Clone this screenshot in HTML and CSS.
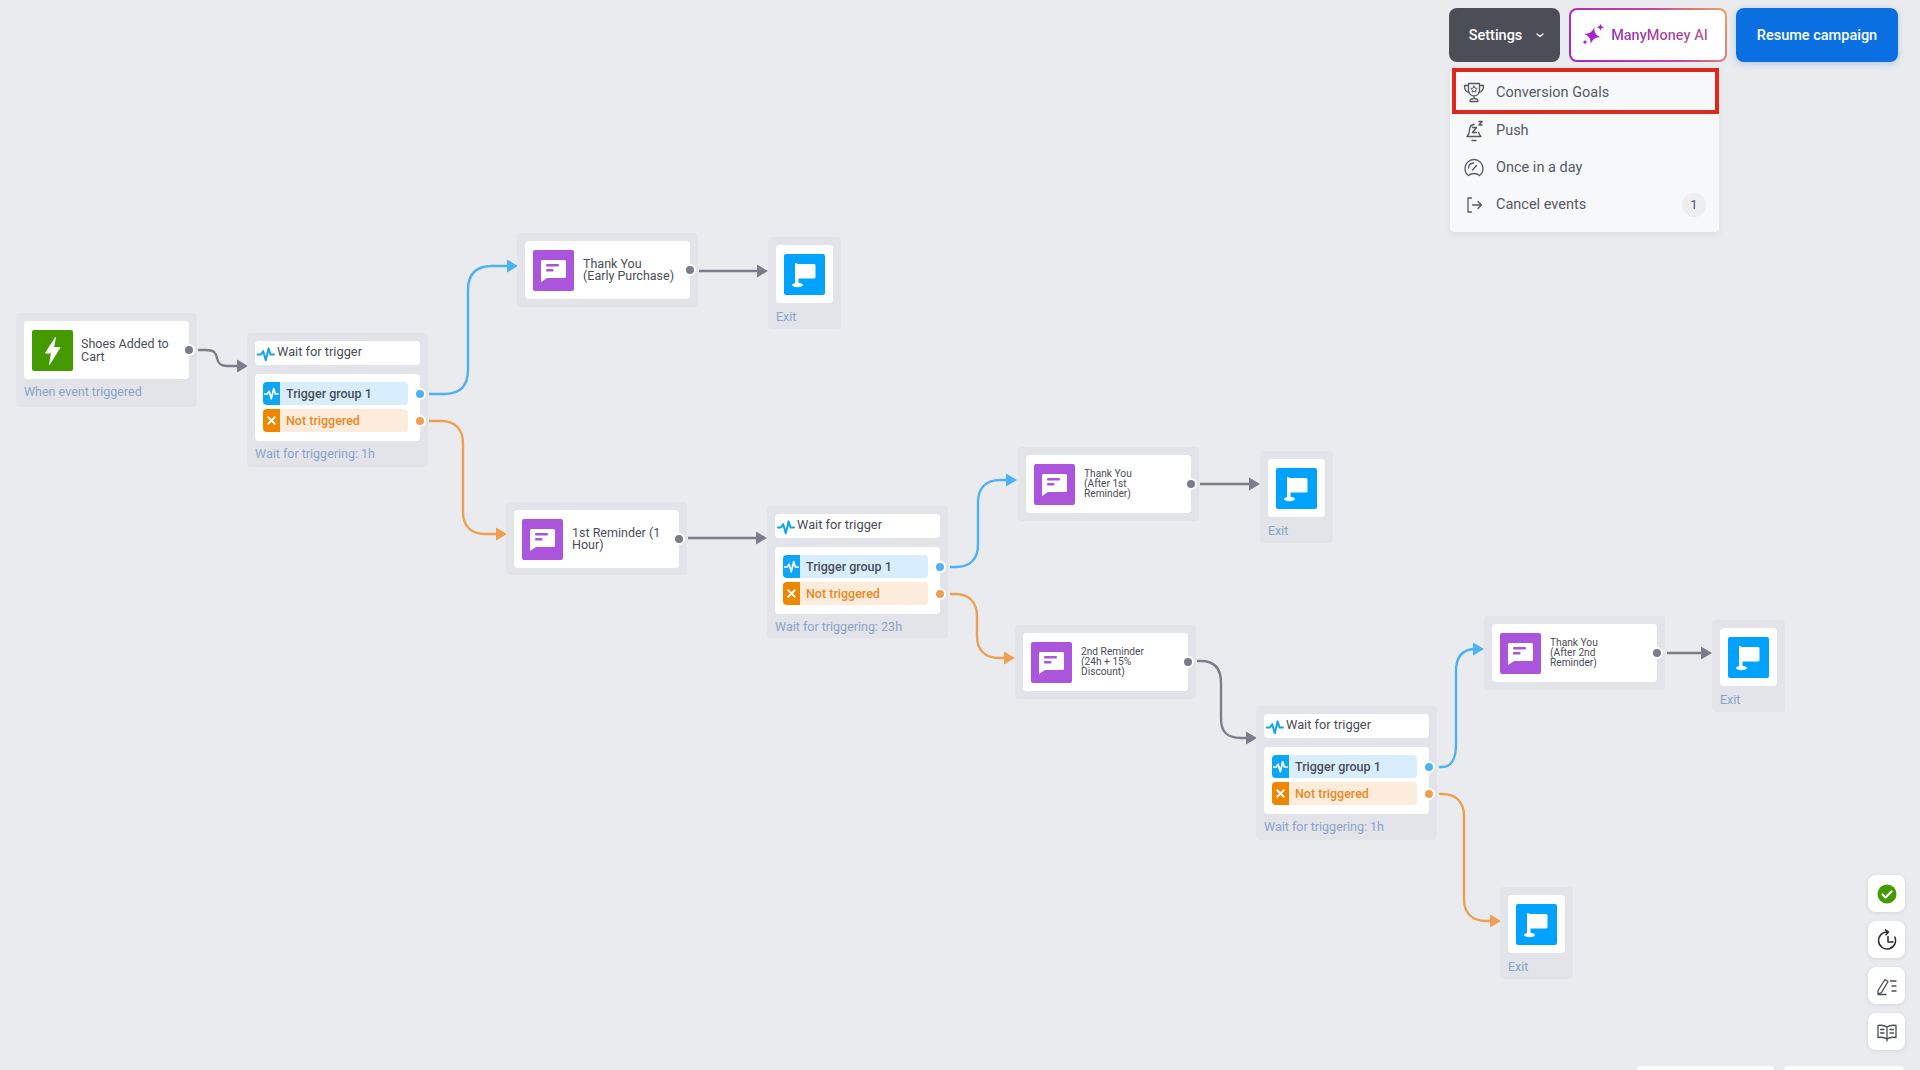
FILE: index.html
```html
<!DOCTYPE html>
<html lang="en">
<head>
  <meta charset="UTF-8" />
  <meta name="viewport" content="width=device-width, initial-scale=1.0"/>
  <title>Campaign flow</title>
  <link rel="stylesheet" href="styles.css">
</head>
<body>
  <svg class="sprite" width="0" height="0">
    <symbol id="i-msg" viewBox="0 0 41 41">
      <path d="M9.5 10h22a1.500 1.500 0 0 1 1.500 1.500v15a1.500 1.500 0 0 1-1.500 1.500H14l-6 4V11.500A1.500 1.500 0 0 1 9.500 10z" fill="#fff"/>
      <rect x="13" y="14" width="13" height="2.400" rx="1" fill="#ab55dc"/>
      <rect x="13" y="19" width="7.500" height="2.400" rx="1" fill="#ab55dc"/>
    </symbol>
    <symbol id="i-flag" viewBox="0 0 41 41">
      <path d="M11 9c1 0 2 .5 3 1h16a1.500 1.500 0 0 1 1.500 1.500v11.500a1.500 1.500 0 0 1-1.500 1.500H14.500V30H11z" fill="#fff"/>
      <ellipse cx="13.500" cy="31" rx="5.500" ry="2.200" fill="#fff"/>
    </symbol>
    <symbol id="i-bolt" viewBox="0 0 41 41">
      <path d="M23.500 7.500 13.500 23h6l-2 11.500L28 17.500h-6.500z" fill="#fff" stroke="#fff" stroke-width="1" stroke-linejoin="round"/>
    </symbol>
    <symbol id="i-pulse" viewBox="0 0 16 16">
      <path d="M.8 8.500h2.700l2 -3 2.300 8 2.500-10.500 1.800 5.500h3" fill="none" stroke="currentColor" stroke-width="1.800" stroke-linejoin="round" stroke-linecap="round"/>
    </symbol>
    <symbol id="i-x" viewBox="0 0 16 16">
      <path d="M4 4l8 8M12 4l-8 8" fill="none" stroke="#fff" stroke-width="2.300" stroke-linecap="round"/>
    </symbol>
  </svg>

  <div class="canvas">
    <svg class="wires" width="1920" height="1070" viewBox="0 0 1920 1070" fill="none" stroke-width="2.400">
      <g class="wire-gray">
        <path d="M198 350h8c8 0 10 3 11 8 1 5 3 8 10 8h13"/>
        <polygon points="237,359.500 248,366 237,372.500"/>
        <path d="M699 271h62"/>
        <polygon points="757,264.500 768,271 757,277.500"/>
        <path d="M688 538h72"/>
        <polygon points="756,531.500 767,538 756,544.500"/>
        <path d="M1200 484h53"/>
        <polygon points="1249,477.500 1260,484 1249,490.500"/>
        <path d="M1197 661h4c14 0 20 8 20 22v35c0 14 6 20 20 20h9"/>
        <polygon points="1246,731.500 1257,738 1246,744.500"/>
        <path d="M1667 653h38"/>
        <polygon points="1701,646.500 1712,653 1701,659.500"/>
      </g>
      <g class="wire-blue">
        <path d="M429 394h15c16 0 24-8 24-24v-80c0-16 8-24 24-24h20"/>
        <polygon points="507,259.500 518,266 507,272.500"/>
        <path d="M950 567h6c14 0 22-8 22-22v-43c0-14 8-22 22-22h10"/>
        <polygon points="1006,473.500 1017,480 1006,486.500"/>
        <path d="M1439 767h3c9 0 14-8 14-22v-74c0-14 6-22 20-22h1"/>
        <polygon points="1473,642.500 1484,649 1473,655.500"/>
      </g>
      <g class="wire-orange">
        <path d="M429 421h12c14 0 22 8 22 22v69c0 14 8 22 22 22h14"/>
        <polygon points="496,527.500 507,534 496,540.500"/>
        <path d="M950 594h5c14 0 22 8 22 22v20c0 14 8 22 22 22h9"/>
        <polygon points="1004,651.500 1015,658 1004,664.500"/>
        <path d="M1439 794h3c14 0 22 8 22 22v83c0 14 8 22 22 22h8"/>
        <polygon points="1490,914.500 1501,921 1490,927.500"/>
      </g>
    </svg>

    <div class="node node-start">
      <div class="card">
        <div class="tile tile-green"><svg width="41" height="41"><use href="#i-bolt"/></svg></div>
        <div class="card-text">Shoes Added to<br>Cart</div>
        <span class="dot"></span>
      </div>
      <div class="node-label">When event triggered</div>
    </div>

    <div class="node node-wait1">
      <div class="wait-head"><svg class="wait-pulse" width="18" height="18"><use href="#i-pulse"/></svg>Wait for trigger</div>
      <div class="wait-body">
        <div class="row row-blue"><span class="row-icon"><svg width="15" height="15"><use href="#i-pulse"/></svg></span>Trigger group 1<span class="dot dot-blue"></span></div>
        <div class="row row-orange"><span class="row-icon"><svg width="13" height="13"><use href="#i-x"/></svg></span>Not triggered<span class="dot dot-orange"></span></div>
      </div>
      <div class="node-label">Wait for triggering: 1h</div>
    </div>

    <div class="node node-msg1">
      <div class="card card-msg">
        <div class="tile tile-purple"><svg width="41" height="41"><use href="#i-msg"/></svg></div>
        <div class="card-text card-text-mid">Thank You<br>(Early Purchase)</div>
        <span class="dot"></span>
      </div>
    </div>

    <div class="node node-exit node-exit1">
      <div class="card"><div class="tile tile-blue"><svg width="41" height="41"><use href="#i-flag"/></svg></div></div>
      <div class="node-label">Exit</div>
    </div>

    <div class="node node-rem1">
      <div class="card card-msg">
        <div class="tile tile-purple"><svg width="41" height="41"><use href="#i-msg"/></svg></div>
        <div class="card-text card-text-mid">1st Reminder (1<br>Hour)</div>
        <span class="dot"></span>
      </div>
    </div>

    <div class="node node-wait2">
      <div class="wait-head"><svg class="wait-pulse" width="18" height="18"><use href="#i-pulse"/></svg>Wait for trigger</div>
      <div class="wait-body">
        <div class="row row-blue"><span class="row-icon"><svg width="15" height="15"><use href="#i-pulse"/></svg></span>Trigger group 1<span class="dot dot-blue"></span></div>
        <div class="row row-orange"><span class="row-icon"><svg width="13" height="13"><use href="#i-x"/></svg></span>Not triggered<span class="dot dot-orange"></span></div>
      </div>
      <div class="node-label">Wait for triggering: 23h</div>
    </div>

    <div class="node node-msg2">
      <div class="card card-msg">
        <div class="tile tile-purple"><svg width="41" height="41"><use href="#i-msg"/></svg></div>
        <div class="card-text card-text-small">Thank You<br>(After 1st<br>Reminder)</div>
        <span class="dot"></span>
      </div>
    </div>

    <div class="node node-exit node-exit2">
      <div class="card"><div class="tile tile-blue"><svg width="41" height="41"><use href="#i-flag"/></svg></div></div>
      <div class="node-label">Exit</div>
    </div>

    <div class="node node-rem2">
      <div class="card card-msg">
        <div class="tile tile-purple"><svg width="41" height="41"><use href="#i-msg"/></svg></div>
        <div class="card-text card-text-small">2nd Reminder<br>(24h + 15%<br>Discount)</div>
        <span class="dot"></span>
      </div>
    </div>

    <div class="node node-wait3">
      <div class="wait-head"><svg class="wait-pulse" width="18" height="18"><use href="#i-pulse"/></svg>Wait for trigger</div>
      <div class="wait-body">
        <div class="row row-blue"><span class="row-icon"><svg width="15" height="15"><use href="#i-pulse"/></svg></span>Trigger group 1<span class="dot dot-blue"></span></div>
        <div class="row row-orange"><span class="row-icon"><svg width="13" height="13"><use href="#i-x"/></svg></span>Not triggered<span class="dot dot-orange"></span></div>
      </div>
      <div class="node-label">Wait for triggering: 1h</div>
    </div>

    <div class="node node-msg3">
      <div class="card card-msg">
        <div class="tile tile-purple"><svg width="41" height="41"><use href="#i-msg"/></svg></div>
        <div class="card-text card-text-small">Thank You<br>(After 2nd<br>Reminder)</div>
        <span class="dot"></span>
      </div>
    </div>

    <div class="node node-exit node-exit3">
      <div class="card"><div class="tile tile-blue"><svg width="41" height="41"><use href="#i-flag"/></svg></div></div>
      <div class="node-label">Exit</div>
    </div>

    <div class="node node-exit node-exit4">
      <div class="card"><div class="tile tile-blue"><svg width="41" height="41"><use href="#i-flag"/></svg></div></div>
      <div class="node-label">Exit</div>
    </div>
  </div>

  <div class="topbar">
    <div class="settings">
      <button class="btn btn-dark">Settings
        <svg width="10" height="10" viewBox="0 0 10 10"><path d="M2 4l3 2.500L8 4" fill="none" stroke="#fff" stroke-width="1.300" stroke-linecap="round"/></svg>
      </button>
      <div class="menu">
        <div class="menu-item menu-item-marked">
          <svg class="menu-icon" width="22" height="22" viewBox="0 0 22 22"><path d="M5.500 2.500h11v7a5.500 5.500 0 0 1-11 0zM5.500 4.500H1.500c0 4 1.500 6.500 4.800 7M16.500 4.500h4c0 4-1.500 6.500-4.800 7M11 15v2.500M7 20.500c0-2 1.500-3 4-3s4 1 4 3z"/><path d="M11 5l1 2.100 2.200.3-1.600 1.500.4 2.200-2-1-2 1 .4-2.200L7.800 7.400l2.200-.3z" class="icon-thin"/></svg>
          Conversion Goals
        </div>
        <div class="menu-item">
          <svg class="menu-icon" width="22" height="24" viewBox="0 0 22 24"><path d="M11 5.500c-3 .3-4.500 2.500-4.500 5.500 0 3-1 5-2.500 6.500h14c-1-1-2-2.500-2.300-4M9 21.500h4"/><path d="M9.500 8.500h4l-4 5h4M16 2.500h3l-3 3.500h3" class="icon-bold"/></svg>
          Push
        </div>
        <div class="menu-item">
          <svg class="menu-icon" width="22" height="22" viewBox="0 0 22 22"><path d="M5.500 18.500C3.300 16.900 2 14.300 2 11.500a9 9 0 0 1 18 0c0 2.800-1.300 5.400-3.500 7-1.500-1.300-3.400-2-5.500-2s-4 .7-5.500 2z"/><path d="M9.500 13l4-4.500M5.500 11a5.500 5.500 0 0 1 5-5"/></svg>
          Once in a day
        </div>
        <div class="menu-item">
          <svg class="menu-icon" width="22" height="22" viewBox="0 0 22 22"><path d="M8.500 4H5v14h3.500M9.500 11H18M15 7.500l3.500 3.500-3.500 3.500"/></svg>
          Cancel events
          <span class="badge">1</span>
        </div>
      </div>
    </div>
    <button class="btn btn-ai">
      <svg width="24" height="24" viewBox="0 0 21 21"><path d="M10 3.500c1.100 4.800 2.700 6.400 7.500 7.500-4.800 1.100-6.400 2.700-7.500 7.500-1.100-4.800-2.700-6.400-7.500-7.500 4.800-1.100 6.400-2.700 7.500-7.500z" fill="#a425c9" transform="rotate(12 10 11)"/><path d="M17 .5c.4 2 1.100 2.700 3.200 3.200-2.100.5-2.800 1.200-3.200 3.200-.4-2-1.100-2.700-3.200-3.200 2.100-.5 2.800-1.200 3.200-3.200zM3.500 14.500c.3 1.400.9 2 2.300 2.300-1.400.3-2 .9-2.300 2.300-.3-1.400-.9-2-2.300-2.300 1.400-.3 2-.9 2.300-2.300z" fill="#a425c9"/></svg>
      <span class="ai-text">ManyMoney AI</span>
    </button>
    <button class="btn btn-blue">Resume campaign</button>
  </div>

  <div class="tools">
    <div class="tool">
      <svg width="20" height="20" viewBox="0 0 20 20"><circle cx="10" cy="10" r="9.500" fill="#459a00"/><path d="M5.500 10.500l3 3 6-6" fill="none" stroke="#fff" stroke-width="2.200" stroke-linecap="round" stroke-linejoin="round"/></svg>
    </div>
    <div class="tool">
      <svg class="tool-line" width="22" height="22" viewBox="0 0 22 22"><path d="M18.800 8A8.500 8.500 0 1 1 11.500 3M9.500.8l3 2.200-2.500 2.700M12 7.500v5.500h5"/></svg>
    </div>
    <div class="tool">
      <svg class="tool-line tool-line-grey" width="24" height="22" viewBox="0 0 24 22"><path d="M3 15.500L10 4.500l3 2-6.500 11-3.500 1.500zM3 19.500h8M15.500 6H21M17 11h4M17 16h4"/></svg>
    </div>
    <div class="tool">
      <svg class="tool-line tool-line-grey" width="22" height="22" viewBox="0 0 22 22"><path d="M11 6C9 4.500 5 4 2 4.500v12c3-.5 7 0 9 1.500 2-1.500 6-2 9-1.500v-12C17 4 13 4.500 11 6zM11 6v14M4.500 8.500H8M4.500 12H8M14 8.500h3.500M14 12h3.500"/></svg>
    </div>
  </div>

  <div class="footer-tabs">
    <div class="footer-tab footer-tab-wide"></div>
    <div class="footer-tab footer-tab-narrow"></div>
  </div>
</body>
</html>
```

FILE: styles.css
```css
* {
  margin: 0;
  padding: 0;
  box-sizing: border-box;
}

body {
  font-family: Roboto, "Liberation Sans", sans-serif;
  background-color: #e9ebef;
  color: #4a4d57;
  height: 100vh;
  overflow: hidden;
  position: relative;
}

.sprite {
  position: absolute;
}

.canvas {
  position: absolute;
  left: 0;
  top: 0;
  width: 1920px;
  height: 1070px;
}

.wires {
  position: absolute;
  left: 0;
  top: 0;
}

.wire-gray path { stroke: #7b7e8a; }
.wire-gray polygon { fill: #7b7e8a; }
.wire-blue path { stroke: #4db2f5; }
.wire-blue polygon { fill: #4db2f5; }
.wire-orange path { stroke: #ee9f50; }
.wire-orange polygon { fill: #ee9f50; }

/* nodes sit on a free canvas */
.node {
  position: absolute;
  width: 181px;
  background-color: #e2e4e9;
  border-radius: 4px;
  padding: 8px 8px 0;
}

.node-start { left: 16px; top: 313px; height: 94px; }
.node-wait1 { left: 247px; top: 333px; height: 134px; }
.node-msg1 { left: 517px; top: 233px; height: 74px; }
.node-exit1 { left: 768px; top: 237px; }
.node-rem1 { left: 506px; top: 502px; height: 73px; }
.node-wait2 { left: 767px; top: 506px; height: 132px; }
.node-msg2 { left: 1018px; top: 447px; height: 74px; }
.node-exit2 { left: 1260px; top: 451px; }
.node-rem2 { left: 1015px; top: 625px; height: 74px; }
.node-wait3 { left: 1256px; top: 706px; height: 134px; }
.node-msg3 { left: 1484px; top: 616px; height: 74px; }
.node-exit3 { left: 1712px; top: 620px; }
.node-exit4 { left: 1500px; top: 887px; }

.node-exit {
  width: 73px;
  height: 92px;
}

.node-exit .node-label {
  margin-top: 6px;
}

.card {
  position: relative;
  display: flex;
  align-items: center;
  gap: 8px;
  height: 58px;
  padding: 0 8px;
  background-color: #fff;
  border-radius: 4px;
}

.card-msg {
  gap: 9px;
}

.tile {
  flex: none;
  width: 41px;
  height: 41px;
  border-radius: 2px;
}

.tile svg {
  display: block;
}

.tile-green { background-color: #459a00; }
.tile-purple { background-color: #ab55dc; }
.tile-blue { background-color: #00a2ff; }

.card-text {
  font-size: 12.5px;
  line-height: 13.500px;
}

.card-text-mid {
  line-height: 12.500px;
}

.card-text-small {
  font-size: 10.200px;
  line-height: 10px;
}

.node-label {
  margin-top: 5px;
  font-size: 12.5px;
  line-height: 16px;
  color: #8aa3cc;
}

.dot {
  position: absolute;
  right: -6px;
  top: 50%;
  width: 12px;
  height: 12px;
  margin-top: -6px;
  background-color: #797d89;
  border: 2px solid #fff;
  border-radius: 50%;
}

.dot-blue { background-color: #4db2f5; }
.dot-orange { background-color: #ee9f50; }

.wait-head {
  display: flex;
  align-items: center;
  gap: 2px;
  height: 24px;
  padding-left: 2px;
  padding-bottom: 3px;
  font-size: 12.8px;
  background-color: #fff;
  border-radius: 4px;
}

.wait-pulse {
  color: #14a5ea;
  margin-top: 5px;
}

.wait-body {
  display: flex;
  flex-direction: column;
  gap: 4px;
  height: 67px;
  margin-top: 9px;
  padding: 8px;
  background-color: #fff;
  border-radius: 4px;
}

.row {
  position: relative;
  display: flex;
  align-items: center;
  gap: 6px;
  width: 145px;
  height: 23px;
  font-size: 12.5px;
  font-weight: 500;
  border-radius: 4px;
}

.row .dot {
  right: -18px;
}

.row-icon {
  display: flex;
  align-items: center;
  justify-content: center;
  flex: none;
  width: 17px;
  height: 100%;
  border-radius: 4px 0 0 4px;
  color: #fff;
}

.row-blue { background-color: #d8edfd; }
.row-blue .row-icon { background-color: #0ea5f5; }
.row-orange { background-color: #fdebdc; color: #e98a1f; }
.row-orange .row-icon { background-color: #ee8600; }

/* top right buttons */
.topbar {
  position: absolute;
  top: 8px;
  right: 22px;
  display: flex;
  gap: 9px;
}

.settings {
  position: relative;
}

.btn {
  display: flex;
  align-items: center;
  justify-content: center;
  height: 54px;
  border: none;
  border-radius: 8px;
  font-family: inherit;
  font-size: 14.5px;
  font-weight: 500;
}

.btn-dark {
  width: 111px;
  gap: 13px;
  padding-left: 5px;
  background-color: #4b4e57;
  color: #fff;
}

.btn-ai {
  width: 158px;
  gap: 6px;
  padding-right: 7px;
  border: 2px solid transparent;
  background: linear-gradient(#fff, #fff) padding-box, linear-gradient(60deg, #a425c9 0%, #c2479a 60%, #f0a35e 100%) border-box;
}

.ai-text {
  background: linear-gradient(90deg, #9b2fb8, #b8558a);
  -webkit-background-clip: text;
  background-clip: text;
  color: transparent;
}

.btn-blue {
  width: 162px;
  background-color: #0a6fe0;
  color: #fff;
  box-shadow: 0 2px 6px rgba(10, 111, 224, 0.25);
}

.menu {
  position: absolute;
  left: 1px;
  top: 60px;
  width: 269px;
  padding: 0 0 9px 2px;
  background-color: #f7f8fa;
  border-radius: 4px;
  box-shadow: 0 2px 6px rgba(60, 65, 80, 0.08);
  font-size: 14.5px;
  color: #565962;
}

.menu-item {
  display: flex;
  align-items: center;
  gap: 11px;
  height: 37px;
  padding: 0 9px 0 7px;
  border: 4px solid transparent;
}

.menu-item-marked {
  height: 46px;
  margin-bottom: -2px;
  padding-top: 2px;
  border-color: #e0281a;
  position: relative;
}

.menu-icon {
  flex: none;
  fill: none;
  stroke: #565962;
  stroke-width: 1.300;
  stroke-linecap: round;
  stroke-linejoin: round;
}

.icon-thin { stroke-width: 1; }
.icon-bold { stroke-width: 1.500; }

.badge {
  display: flex;
  align-items: center;
  justify-content: center;
  width: 24px;
  height: 24px;
  margin-left: auto;
  background-color: #eceef1;
  border-radius: 50%;
  font-size: 13px;
}

/* side tools */
.tools {
  position: absolute;
  right: 15px;
  top: 875px;
  display: flex;
  flex-direction: column;
  gap: 9px;
}

.tool {
  display: flex;
  align-items: center;
  justify-content: center;
  width: 37px;
  height: 37px;
  background-color: #fff;
  border-radius: 8px;
  box-shadow: 0 1px 4px rgba(60, 65, 80, 0.12);
}

.tool-line {
  fill: none;
  stroke: #26282e;
  stroke-width: 1.500;
  stroke-linecap: round;
  stroke-linejoin: round;
}

.tool-line-grey {
  stroke: #4a4d57;
  stroke-width: 1.300;
}

.footer-tabs {
  position: absolute;
  right: 16px;
  top: 1066px;
  display: flex;
  gap: 10px;
}

.footer-tab {
  height: 4px;
  background-color: #fff;
  border-radius: 4px 4px 0 0;
}

.footer-tab-wide { width: 137px; }
.footer-tab-narrow { width: 120px; }
```
